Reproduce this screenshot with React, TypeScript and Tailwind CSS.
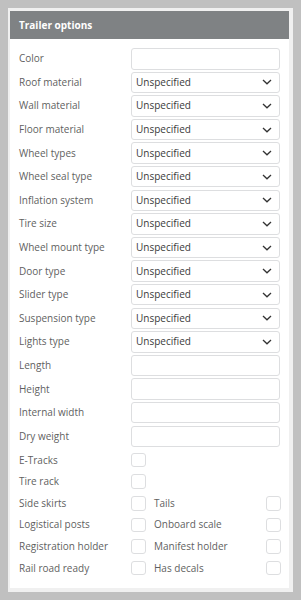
const selects = [
  "Roof material",
  "Wall material",
  "Floor material",
  "Wheel types",
  "Wheel seal type",
  "Inflation system",
  "Tire size",
  "Wheel mount type",
  "Door type",
  "Slider type",
  "Suspension type",
  "Lights type",
];

const texts = ["Length", "Height", "Internal width", "Dry weight"];

const pairs: [string, string | null][] = [
  ["E-Tracks", null],
  ["Tire rack", null],
  ["Side skirts", "Tails"],
  ["Logistical posts", "Onboard scale"],
  ["Registration holder", "Manifest holder"],
  ["Rail road ready", "Has decals"],
];

function TextInput() {
  return <div className="h-[21.5px] w-[148.5px] rounded-[3px] border border-[#dddee0] bg-white" />;
}

function Select() {
  return (
    <div className="flex h-[21.5px] w-[148.5px] items-center justify-between rounded-[3px] border border-[#dddee0] bg-white pl-[4px] pr-[7px] text-[#3a3a3a]">
      <span>Unspecified</span>
      <svg width="10" height="6" viewBox="0 0 10 6" fill="none">
        <path d="M1 1 L5 4.8 L9 1" stroke="#333" strokeWidth="1.3" />
      </svg>
    </div>
  );
}

function Box() {
  return <div className="size-[14.5px] rounded-[3px] border border-[#dddee0] bg-white" />;
}

export default function App() {
  return (
    <div className="min-h-screen bg-[#c0c0c0] pl-[8px] pt-[8px] font-['Open_Sans',sans-serif] text-[10px] text-[#5f5f5f]">
      <div className="h-[584px] w-[285px] bg-[#f0f0f0] pb-[4px] pl-[2px] pr-[4px] pt-[3px]">
        <div className="flex h-full flex-col bg-white">
          <div className="flex h-[28px] items-center bg-[#7f8284] px-[9px] text-[10px] font-bold text-white">
            Trailer options
          </div>
          <div className="flex flex-col gap-y-[2.1px] px-[9px] pt-[9px]">
            <div className="grid grid-cols-[112px_148.5px] items-center">
              <span>Color</span>
              <TextInput />
            </div>
            {selects.map((s) => (
              <div key={s} className="grid grid-cols-[112px_148.5px] items-center">
                <span>{s}</span>
                <Select />
              </div>
            ))}
            {texts.map((s) => (
              <div key={s} className="grid grid-cols-[112px_148.5px] items-center">
                <span>{s}</span>
                <TextInput />
              </div>
            ))}
          </div>
          <div className="mt-[5.6px] flex flex-col gap-y-[6.6px] px-[9px]">
            {pairs.map(([a, b]) => (
              <div key={a} className="grid grid-cols-[112px_23px_112px_15px] items-center">
                <span>{a}</span>
                <Box />
                {b && (
                  <>
                    <span>{b}</span>
                    <Box />
                  </>
                )}
              </div>
            ))}
          </div>
        </div>
      </div>
    </div>
  );
}
